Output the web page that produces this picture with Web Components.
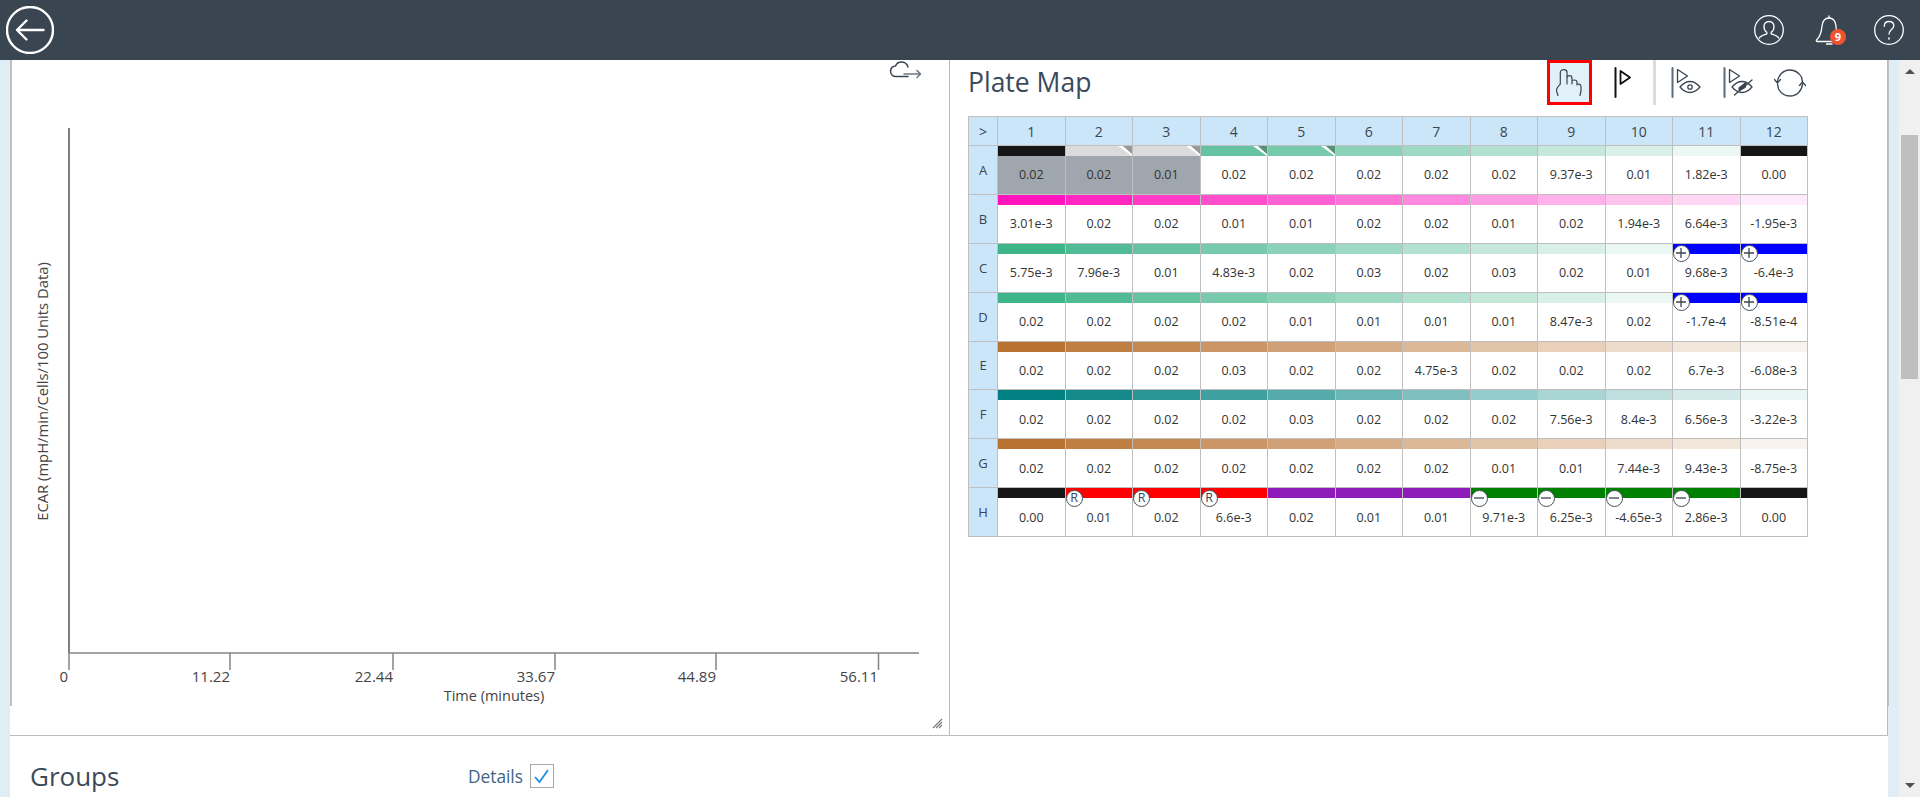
<!DOCTYPE html>
<html>
<head>
<meta charset="utf-8">
<title>Plate Map</title>
<style>
  html, body { margin: 0; height: 100%; overflow: hidden; }
  body { font-family: "Open Sans", "Liberation Sans", sans-serif; color: #3a4552; }
</style>
</head>
<body>
<assay-page>
  <top-bar slot="top"></top-bar>
  <chart-panel slot="chart"></chart-panel>
  <plate-pane slot="plate"></plate-pane>
  <groups-bar slot="groups"></groups-bar>
  <page-scrollbar slot="scrollbar"></page-scrollbar>
</assay-page>

<script>
const define = (name, html) => {
  customElements.define(name, class extends HTMLElement {
    constructor() {
      super();
      this.attachShadow({mode: 'open'}).innerHTML = html;
    }
  });
};

define('assay-page', `
<style>
  :host { display: flex; flex-direction: column; height: 100vh; overflow: hidden; }
  .main { flex: 1; min-height: 0; display: flex; }
  .rail { flex: 1; min-width: 0; display: flex; background: #e1edf5; padding-left: 10px; }
  .sheet { width: 1878px; background: #fff; }
  .row { display: flex; height: 675px; border-bottom: 1px solid #bbb; border-right: 1px solid #bbb; }
  .edge { width: 1px; height: 646px; background: #c0c0c0; }
</style>
<slot name="top"></slot>
<div class="main">
  <div class="rail">
    <div class="sheet">
      <div class="row"><slot name="chart"></slot><slot name="plate"></slot></div>
      <slot name="groups"></slot>
    </div>
    <div class="edge"></div>
  </div>
  <slot name="scrollbar"></slot>
</div>
`);

define('top-bar', `
<style>
  :host { display: flex; align-items: center; height: 60px; background: #3a4552; padding: 0 16px 0 6px; }
  svg { display: block; fill: none; stroke: #fff; stroke-linecap: round; stroke-linejoin: round; }
  .right { margin-left: auto; display: flex; align-items: center; gap: 30px; }
  .bell { position: relative; width: 30px; height: 30px; }
  .badge {
    position: absolute; left: 16px; top: 14px; width: 16px; height: 16px; border-radius: 50%;
    background: #f0522f; color: #fff; font-size: 11px; font-weight: 700; line-height: 16px; text-align: center;
  }
</style>
<svg width="48" height="48" viewBox="0 0 48 48" stroke-width="2.4">
  <circle cx="24" cy="24" r="23"/>
  <path d="M37.5 24H11M20.5 14.5L11 24l9.5 9.5"/>
</svg>
<div class="right">
  <svg width="30" height="30" viewBox="0 0 30 30" stroke-width="1.3">
    <circle cx="15" cy="15" r="14.3"/>
    <path d="M15 6.5c-3.2 0-5 2.4-5 5.2 0 2.6 1.3 4.6 2.8 5.6v1.6c-2.6 1-6.4 1.9-7.6 4.2M15 6.5c3.2 0 5 2.4 5 5.2 0 2.6-1.3 4.6-2.8 5.6v1.6c2.6 1 6.4 1.9 7.6 4.2"/>
  </svg>
  <div class="bell">
    <svg width="30" height="30" viewBox="0 0 30 30" stroke-width="1.3">
      <path d="M15 1v2M15 3C10 3 8.5 7 8 11 7.5 17 6 22 2.5 25 2 26 2.5 26.5 3.5 26.5H24M12.5 29H18"/>
      <path d="M15 3c5 0 6.5 4 7 8l.3 3.5"/>
    </svg>
    <div class="badge">9</div>
  </div>
  <svg width="30" height="30" viewBox="0 0 30 30" stroke-width="1.3">
    <circle cx="15" cy="15" r="14.3"/>
    <path d="M10.3 11.3c0-3 2-4.8 4.800-4.800s4.700 1.800 4.700 4.300c0 3.900-4.800 3.700-4.800 8.200"/>
    <path d="M15 23v1" stroke-width="1.6"/>
  </svg>
</div>
`);

define('chart-panel', `
<style>
  :host { display: block; position: relative; width: 939px; height: 675px; border-right: 1px solid #bbb; flex: none; }
  .edge { position: absolute; left: 0; top: 0; width: 2px; height: 646px; background: #c0c0c0; }
  svg { position: absolute; left: 0; top: 0; display: block; }
  text { font-family: "Open Sans", sans-serif; font-size: 15px; fill: #444; }
  .axis { stroke: #858585; stroke-width: 1.5; fill: none; }
</style>
<div class="edge"></div>
<svg width="939" height="675" viewBox="10 60 939 675">
  <path d="M69 128V653" stroke="#555" stroke-width="1.5" fill="none"/>
  <path class="axis" d="M69 653H919M69 653V670M230 653V670M393 653V670M555 653V670M716 653V670M878.5 653V670"/>
  <text x="68" y="682" text-anchor="end">0</text>
  <text x="230" y="682" text-anchor="end">11.22</text>
  <text x="393" y="682" text-anchor="end">22.44</text>
  <text x="555" y="682" text-anchor="end">33.67</text>
  <text x="716" y="682" text-anchor="end">44.89</text>
  <text x="878" y="682" text-anchor="end">56.11</text>
  <text x="494" y="701" text-anchor="middle" style="font-size:14.5px">Time (minutes)</text>
  <text transform="translate(48 391.5) rotate(-90)" text-anchor="middle" style="font-size:14.8px">ECAR (mpH/min/Cells/100 Units Data)</text>
  <g fill="none" stroke="#3a4552" stroke-width="1.5" stroke-linecap="round" stroke-linejoin="round">
    <path d="M908 76.5H896c-3.5 0-5.5-2.500-5.5-5.500s2.500-5 5-5c1-2.500 3.500-4 6-4 3 0 5.500 2 6.500 5"/>
    <path d="M904 74h16M917 70.5l3.5 3.500-3.500 3.500" stroke="#6b7580"/>
  </g>
  <g stroke="#777" stroke-width="1.1">
    <path d="M933 728l9-9M936 728l6-6M939 728l3-3"/>
  </g>
</svg>
`);

define('plate-pane', `
<style>
  :host { display: block; flex: 1; min-width: 0; padding-left: 18px; }
  .head { display: flex; width: 840px; height: 56px; align-items: flex-start; }
  h2 { margin: 0; font-size: 26.5px; font-weight: 400; line-height: 44px; color: #3a4a5a; }
  plate-toolbar { margin-left: auto; }
</style>
<div class="head"><h2>Plate Map</h2><plate-toolbar></plate-toolbar></div>
<plate-map></plate-map>
`);

define('plate-toolbar', `
<style>
  :host { display: flex; height: 45px; margin-right: -10px; }
  .t { display: flex; align-items: center; justify-content: center; height: 45px; box-sizing: border-box; }
  .hand { width: 45px; border: 3px solid #f00; background: #e0f1f9; }
  .sep { width: 3px; background: #dcdcdc; }
  svg { display: block; fill: none; stroke-linecap: round; stroke-linejoin: round; }
</style>
<div class="t hand">
  <svg width="27" height="28" viewBox="0 0 27 28" stroke="#3a4552" stroke-width="1.2">
    <path d="M2 26.5c-.5-2-1.5-3.5-1.500-5.500 0-2 2-4 3.800-6V3.300C4.300 1.800 6 .7 7.700.7S11 1.800 11 3.300V15M11 9c0-1.500 1-2.300 2.500-2.300S16 8 16 9.500V15M16 12.500c0-1 1-1.500 2.500-1.500s2.500 1 2.500 2.300V16M21 16c0-.8 1-1 2-.8 1.300.3 2 1.300 2 2.500V22l-1 4.500"/>
  </svg>
</div>
<div class="t" style="width:61px">
  <svg width="17" height="31" viewBox="0 0 17 31" stroke="#111">
    <path d="M1.5 1v29" stroke-width="2"/>
    <path d="M6.5 4l9.5 6.500-9.500 6.500z" stroke-width="1.8"/>
  </svg>
</div>
<div class="t sep"></div>
<div class="t" style="width:59px">
  <svg width="30" height="31" viewBox="0 0 30 31" stroke="#3a4552" stroke-width="1.3">
    <path d="M1.5 1v29" stroke="#5e6b78" stroke-width="2"/>
    <path d="M6.5 2.5l10 6.500-10 6.500z"/>
    <path d="M9 20c3-3.500 6-5.500 10-5.500s7 2 10 5.500c-3 3.500-6 5.500-10 5.500S12 23.500 9 20z"/>
    <circle cx="19" cy="20" r="2.2"/>
  </svg>
</div>
<div class="t" style="width:46px">
  <svg width="30" height="31" viewBox="0 0 30 31" stroke="#3a4552" stroke-width="1.3">
    <path d="M1.5 1v29" stroke="#5e6b78" stroke-width="2"/>
    <path d="M6.5 2.5l10 6.500-10 6.500z"/>
    <path d="M9 20c3-3.500 6-5.500 10-5.500s7 2 10 5.500c-3 3.500-6 5.500-10 5.500S12 23.500 9 20z"/>
    <path d="M16 21l7-5.500-1 5-5.500 3z" fill="#3a4552"/>
    <path d="M11.5 28L29 13"/>
  </svg>
</div>
<div class="t" style="width:57px">
  <svg width="32" height="28" viewBox="0 0 32 28" stroke="#3a4552" stroke-width="1.3">
    <path d="M3.5 13C4 6.500 9 1 16 1c5.500 0 9 3 11.500 7l1 5"/>
    <path d="M28.5 15c-.5 6.500-5.500 12-12.500 12-5.500 0-9-3-11.500-7l-1-5"/>
    <path d="M.5 10.500l3 3.500 3-3.500M25.500 16.500l3-3.500 3 3.500"/>
  </svg>
</div>
`);

const WELL_BADGE = {
  plus: '<svg viewBox="0 0 14 14"><path d="M2 7h10M7 2v10"/></svg>',
  minus: '<svg viewBox="0 0 14 14"><path d="M2 7h10"/></svg>',
  r: 'R',
};

class PlateWell extends HTMLElement {
  constructor() {
    super();
    const root = this.attachShadow({mode: 'open'});
    const badge = this.getAttribute('badge');
    const corner = this.getAttribute('corner');
    root.innerHTML = `
<style>
  :host { display: flex; flex-direction: column; position: relative; background: #fff; min-width: 0; }
  :host([dim]) { background: #9fa6ad; }
  .bar { height: 10px; flex: none; display: flex; justify-content: flex-end; }
  .bar svg { display: block; }
  .val { flex: 1; display: flex; align-items: center; justify-content: center; font-size: 12.5px; color: #333; }
  .badge {
    position: absolute; left: 0; top: 1.5px; width: 17px; height: 17px; box-sizing: border-box;
    border: 1.5px solid #47525e; border-radius: 50%; background: #fff; color: #3a4552;
    font-size: 12.5px; line-height: 14px; text-align: center;
  }
  .badge svg { display: block; width: 14px; height: 14px; fill: none; stroke: #3a4552; stroke-width: 1.3; }
</style>
<div class="bar" style="background:${this.getAttribute('color')}">${corner ? `<svg width="14" height="10"><polygon points="0,0 5,0 14,8 14,10" fill="#fff"/><polygon points="5,0 14,0 14,8" fill="${corner}"/></svg>` : ''}</div>
<div class="val"><slot></slot></div>
${badge ? `<div class="badge">${WELL_BADGE[badge]}</div>` : ''}`;
  }
}
customElements.define('plate-well', PlateWell);

const GREEN = '62,180,137';
const PINK = '255,20,189';
const BROWN = '185,114,49';
const TEAL = '0,128,128';

const VALUES = [
  '0.02 0.02 0.01 0.02 0.02 0.02 0.02 0.02 9.37e-3 0.01 1.82e-3 0.00',
  '3.01e-3 0.02 0.02 0.01 0.01 0.02 0.02 0.01 0.02 1.94e-3 6.64e-3 -1.95e-3',
  '5.75e-3 7.96e-3 0.01 4.83e-3 0.02 0.03 0.02 0.03 0.02 0.01 9.68e-3 -6.4e-3',
  '0.02 0.02 0.02 0.02 0.01 0.01 0.01 0.01 8.47e-3 0.02 -1.7e-4 -8.51e-4',
  '0.02 0.02 0.02 0.03 0.02 0.02 4.75e-3 0.02 0.02 0.02 6.7e-3 -6.08e-3',
  '0.02 0.02 0.02 0.02 0.03 0.02 0.02 0.02 7.56e-3 8.4e-3 6.56e-3 -3.22e-3',
  '0.02 0.02 0.02 0.02 0.02 0.02 0.02 0.01 0.01 7.44e-3 9.43e-3 -8.75e-3',
  '0.00 0.01 0.02 6.6e-3 0.02 0.01 0.01 9.71e-3 6.25e-3 -4.65e-3 2.86e-3 0.00',
].map((row) => row.split(' '));

const BLACK = '#161616';

// fades a group colour out along the row, like the dose series in the original
const fade = (rgb, c, steps) => `rgba(${rgb},${(steps - c) / steps})`;

function wellProps(r, c) {
  const letter = 'ABCDEFGH'[r];
  if (letter === 'A') {
    if (c === 0) return {color: BLACK, dim: true};
    if (c === 11) return {color: BLACK};
    if (c < 3) return {color: '#dbdbdb', corner: '#999', dim: true};
    return {color: `rgba(${GREEN},${(11 - c) / 10})`, corner: c < 5 ? '#5a9078' : null};
  }
  if (letter === 'B') return {color: fade(PINK, c, 12)};
  if (letter === 'C' || letter === 'D') {
    return c >= 10 ? {color: '#00f', badge: 'plus'} : {color: fade(GREEN, c, 10)};
  }
  if (letter === 'E' || letter === 'G') return {color: fade(BROWN, c, 12)};
  if (letter === 'F') return {color: fade(TEAL, c, 12)};
  if (c === 0 || c === 11) return {color: BLACK};
  if (c < 4) return {color: '#f00', badge: 'r'};
  if (c < 7) return {color: '#8e1cb8'};
  return {color: '#008000', badge: 'minus'};
}

class PlateMap extends HTMLElement {
  constructor() {
    super();
    const root = this.attachShadow({mode: 'open'});
    let cells = '<div class="h">&gt;</div>';
    for (let c = 1; c <= 12; c++) cells += `<div class="h">${c}</div>`;
    VALUES.forEach((row, r) => {
      cells += `<div class="h l">${'ABCDEFGH'[r]}</div>`;
      row.forEach((val, c) => {
        const p = wellProps(r, c);
        cells += `<plate-well color="${p.color}"${p.corner ? ` corner="${p.corner}"` : ''}${p.badge ? ` badge="${p.badge}"` : ''}${p.dim ? ' dim' : ''}>${val}</plate-well>`;
      });
    });
    root.innerHTML = `
<style>
  :host {
    display: grid; grid-template-columns: 28px repeat(12, 1fr); grid-template-rows: 28px repeat(8, 1fr);
    gap: 1px; padding: 1px; width: 840px; height: 421px; box-sizing: border-box; background: #bfbfbf;
  }
  .h { background: #cbe6f8; display: flex; align-items: center; justify-content: center; font-size: 14px; color: #3a4552; }
  .l { font-size: 13px; }
</style>
${cells}`;
  }
}
customElements.define('plate-map', PlateMap);

define('groups-bar', `
<style>
  :host { display: grid; grid-template-columns: 438px auto auto; justify-content: start; align-items: center; padding: 28px 0 0 20px; }
  h2 { margin: 0; font-size: 26px; font-weight: 400; line-height: 24px; color: #3a4a5a; }
  span { font-size: 17.3px; color: #3f6488; margin-right: 7px; }
  .box { width: 24px; height: 24px; box-sizing: border-box; border: 1px solid #a8a8a8; }
  svg { display: block; fill: none; stroke: #1a8fe0; stroke-width: 1.8; }
</style>
<h2>Groups</h2>
<span>Details</span>
<div class="box"><svg width="22" height="22" viewBox="0 0 22 22"><path d="M4 12l4.500 5L17 5"/></svg></div>
`);

define('page-scrollbar', `
<style>
  :host { display: flex; flex-direction: column; align-items: center; width: 21px; flex: none; background: #f0f0f0; }
  .up, .down { width: 0; height: 0; border-left: 5px solid transparent; border-right: 5px solid transparent; }
  .up { border-bottom: 5px solid #505050; margin-top: 9px; }
  .down { border-top: 5px solid #505050; margin-top: auto; margin-bottom: 9px; }
  .thumb { width: 17px; height: 244px; background: #bfbfbf; margin-top: 61px; }
</style>
<div class="up"></div>
<div class="thumb"></div>
<div class="down"></div>
`);
</script>
</body>
</html>
